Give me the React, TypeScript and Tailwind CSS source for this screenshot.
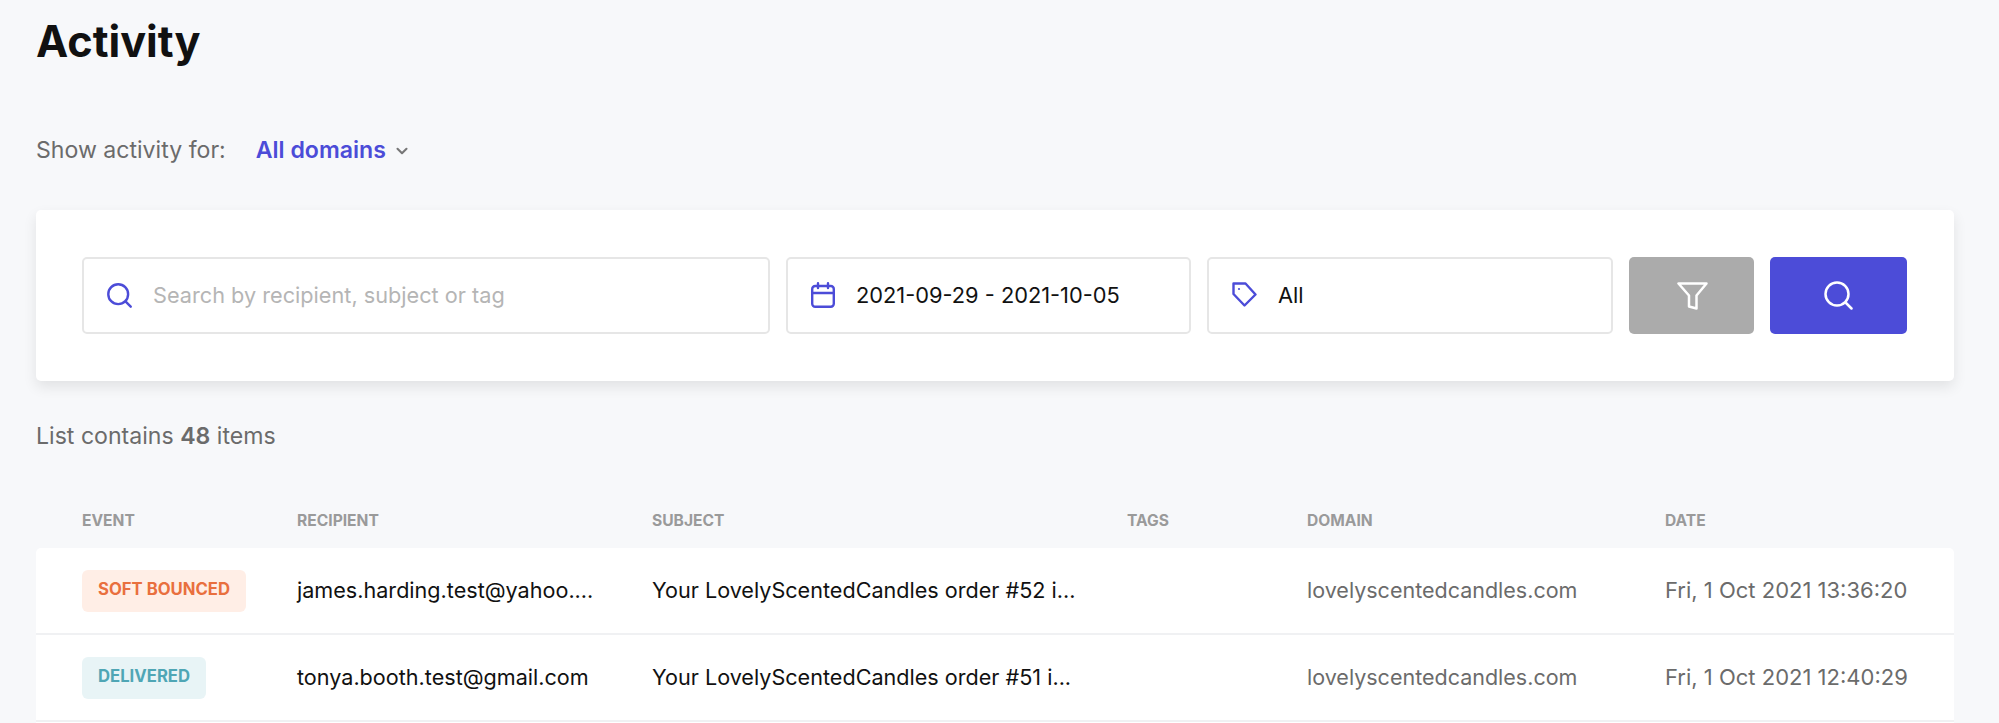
import React from "react";
import { ChevronDown } from "lucide-react";

const columns = "grid grid-cols-[215px_355px_475px_180px_358px_1fr] pl-[46px]";

const rows = [
  {
    event: "SOFT BOUNCED",
    badge: "bg-[#ffeee6] text-[#e96f3e]",
    recipient: "james.harding.test@yahoo....",
    subject: "Your LovelyScentedCandles order #52 i...",
    date: "Fri, 1 Oct 2021 13:36:20",
  },
  {
    event: "DELIVERED",
    badge: "bg-[#e8f4f6] text-[#4fa6b5]",
    recipient: "tonya.booth.test@gmail.com",
    subject: "Your LovelyScentedCandles order #51 i...",
    date: "Fri, 1 Oct 2021 12:40:29",
  },
];

const SearchIcon: React.FC<{ className?: string; strokeWidth: number }> = ({ className, strokeWidth }) => (
  <svg viewBox="0 0 29 29" fill="none" stroke="currentColor" strokeWidth={strokeWidth} strokeLinecap="round" className={className}>
    <circle cx="13" cy="13" r="11.5" />
    <path d="M22 22L27.5 27.5" />
  </svg>
);

const CalendarIcon: React.FC = () => (
  <svg viewBox="0 0 24 26" fill="none" stroke="currentColor" strokeWidth="2.4" strokeLinecap="round" className="h-[26px] w-[24px] -translate-y-[1px] text-[#4c4cd8]">
    <rect x="1.2" y="4" width="21.6" height="20.8" rx="3" />
    <path d="M1.2 11H22.8M7 1.2V6M17 1.2V6" />
  </svg>
);

const TagIcon: React.FC = () => (
  <svg viewBox="0 0 25 25" fill="none" stroke="currentColor" strokeWidth="2.4" strokeLinejoin="round" className="size-[25px] -translate-y-[1px] text-[#4c4cd8]">
    <path d="M1.5 1.5H13.5L23.5 12.5L12.5 23.5L1.5 12Z" />
    <circle cx="7" cy="7" r="1.1" fill="currentColor" stroke="none" />
  </svg>
);

const FunnelIcon: React.FC = () => (
  <svg viewBox="0 0 31 28" fill="none" stroke="currentColor" strokeWidth="2.5" strokeLinejoin="round" className="ml-[2px] h-[28px] w-[31px] text-white">
    <path d="M1.5 1.5H29.5L19.5 13.5V26.5L12 24.5V13.5Z" />
  </svg>
);

const App: React.FC = () => {
  return (
    <div className="h-[723px] overflow-hidden bg-[#f7f8fa] pl-[36px] pr-[45px] font-['Inter',sans-serif]">
      <h1 className="mt-[16px] h-[50px] text-[43.2px] leading-[50px] font-bold text-[#111111]">
        Activity
      </h1>

      <div className="mt-[69px] flex h-[30px] items-center text-[23.1px] text-[#6b6b6b]">
        <span>Show activity for:</span>
        <button className="ml-[30px] flex items-center font-semibold text-[#4c4cd8]">
          All domains
          <ChevronDown className="ml-[7px] mt-[2px] size-[18px] text-[#777777]" strokeWidth={2.8} />
        </button>
      </div>

      <div className="mt-[45px] flex h-[171px] w-[1918px] gap-[16px] rounded-[5px] bg-white pl-[46px] pt-[47px] shadow-[0_6px_14px_rgba(0,0,0,0.09)]">
        <div className="flex h-[77px] w-[688px] items-center rounded-[5px] border-2 border-[#e6e6e6] pl-[23px] text-[21.7px]">
          <SearchIcon className="size-[25px] text-[#4c4cd8]" strokeWidth={2.8} />
          <span className="ml-[21px] text-[#b5b5b5]">Search by recipient, subject or tag</span>
        </div>
        <div className="flex h-[77px] w-[405px] items-center rounded-[5px] border-2 border-[#e6e6e6] pl-[23px] text-[21.8px] text-[#111111]">
          <CalendarIcon />
          <span className="ml-[21px]">2021-09-29 - 2021-10-05</span>
        </div>
        <div className="flex h-[77px] w-[406px] items-center rounded-[5px] border-2 border-[#e6e6e6] pl-[23px] text-[21.8px] text-[#111111]">
          <TagIcon />
          <span className="ml-[21px]">All</span>
        </div>
        <button className="flex h-[77px] w-[125px] items-center justify-center rounded-[5px] bg-[#ababab]">
          <FunnelIcon />
        </button>
        <button className="flex h-[77px] w-[137px] items-center justify-center rounded-[5px] bg-[#4c4cd8]">
          <SearchIcon className="size-[29px] text-white" strokeWidth={2.5} />
        </button>
      </div>

      <p className="mt-[40px] h-[30px] text-[23.1px] leading-[30px] text-[#6b6b6b]">
        List contains <strong className="font-semibold">48</strong> items
      </p>

      <div className={`${columns} mt-[55px] h-[42px] pt-[4px] text-[15.6px] leading-[22px] font-bold text-[#9a9a9a]`}>
        <span>EVENT</span>
        <span>RECIPIENT</span>
        <span>SUBJECT</span>
        <span>TAGS</span>
        <span>DOMAIN</span>
        <span>DATE</span>
      </div>

      <div className="rounded-t-[5px] bg-white">
        {rows.map((row) => (
          <div key={row.date} className={`${columns} h-[87px] items-center border-b-2 border-[#f0f1f3] text-[21.6px] text-[#111111]`}>
            <div>
              <span className={`inline-flex h-[42px] w-fit items-center rounded-[6px] px-[16px] pb-[2px] text-[16.7px] font-bold ${row.badge}`}>
                {row.event}
              </span>
            </div>
            <span>{row.recipient}</span>
            <span>{row.subject}</span>
            <span />
            <span className="text-[21.5px] text-[#6b6b6b]">lovelyscentedcandles.com</span>
            <span className="text-[22px] text-[#6b6b6b]">{row.date}</span>
          </div>
        ))}
        <div className="h-[40px]" />
      </div>
    </div>
  );
};

export default App;
